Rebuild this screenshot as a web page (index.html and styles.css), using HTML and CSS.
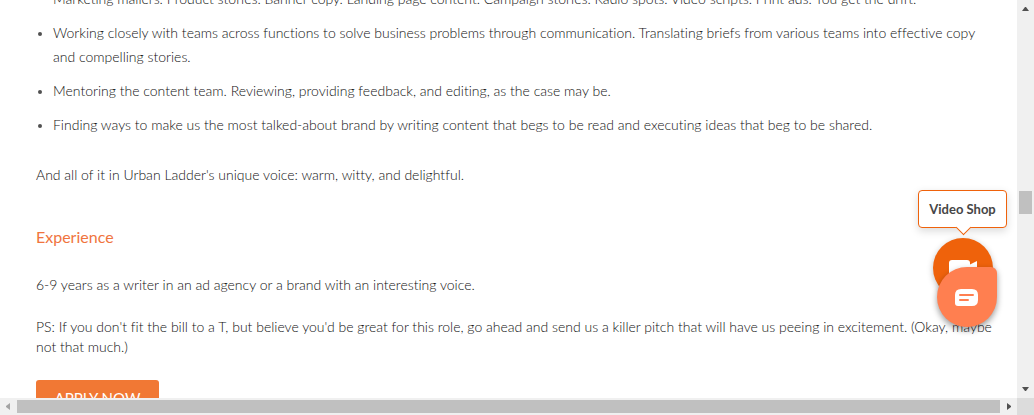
FILE: index.html
```html
<!DOCTYPE html>
<html lang="en">
<head>
<meta charset="utf-8">
<title>Careers</title>
<link rel="stylesheet" href="styles.css">
</head>
<body>
<div class="frame">
  <main class="page">
    <ul class="duties">
      <li class="plain">Marketing mailers. Product stories. Banner copy. Landing page content. Campaign stories. Radio spots. Video scripts. Print ads. You get the drift.</li>
      <li>Working closely with teams across functions to solve business problems through communication. Translating briefs from various teams into effective copy and compelling stories.</li>
      <li>Mentoring the content team. Reviewing, providing feedback, and editing, as the case may be.</li>
      <li>Finding ways to make us the most talked-about brand by writing content that begs to be read and executing ideas that beg to be shared.</li>
    </ul>
    <p class="voice">And all of it in Urban Ladder's unique voice: warm, witty, and delightful.</p>
    <h2 class="heading">Experience</h2>
    <p class="text">6-9 years as a writer in an ad agency or a brand with an interesting voice.</p>
    <p class="text">PS: If you don't fit the bill to a T, but believe you'd be great for this role, go ahead and send us a killer pitch that will have us peeing in excitement. (Okay, maybe not that much.)</p>
    <button class="apply" type="button">APPLY NOW</button>
  </main>
  <aside class="widgets">
    <div class="tip">Video Shop</div>
    <button class="video" type="button" aria-label="Video Shop">
      <svg width="28" height="16" viewBox="0 0 28 16"><rect width="21" height="16" rx="3" fill="#fff"/><path d="M20 5 28 1V15L20 11Z" fill="#fff"/></svg>
    </button>
    <button class="chat" type="button" aria-label="Chat">
      <svg width="24" height="18" viewBox="0 0 24 18"><path d="M6 1H17Q23 1 23 7V12Q23 18 17 18H3Q0 18 0 15V7Q0 1 6 1Z" fill="#fff"/><path d="M5 7H18M5 12H13" stroke="#ff7f50" stroke-width="2" stroke-linecap="round"/></svg>
    </button>
  </aside>
  <div class="bar bar-y">
    <svg class="arrow" width="17" height="17" viewBox="0 0 17 17"><path d="M5 11 8 7H9L12 11Z" fill="#505050"/></svg>
    <div class="track"><div class="thumb"></div></div>
    <svg class="arrow" width="17" height="17" viewBox="0 0 17 17"><path d="M5 6 8 10H9L12 6Z" fill="#505050"/></svg>
  </div>
  <div class="bar bar-x">
    <svg class="arrow" width="17" height="17" viewBox="0 0 17 17"><path d="M10 5 6 8V9L10 12Z" fill="#a3a3a3"/></svg>
    <div class="thumb"></div>
    <svg class="arrow" width="17" height="17" viewBox="0 0 17 17"><path d="M7 5 11 8V9L7 12Z" fill="#505050"/></svg>
  </div>
  <div class="corner"></div>
</div>
</body>
</html>
```
FILE: styles.css
```css
* { box-sizing: border-box; }
body {
  margin: 0;
  background: #fff;
  color: #111;
  font-family: Lato, "Liberation Sans", sans-serif;
  font-size: 14px;
  font-weight: 300;
  font-variant-ligatures: none;
  line-height: 20px;
}
.frame {
  display: grid;
  grid-template-columns: minmax(0, 1fr) 17px;
  grid-template-rows: minmax(0, 1fr) 17px;
  height: 100vh;
  overflow: hidden;
  position: relative;
}
.page { overflow: hidden; padding: 0 24px 0 36px; }
.duties {
  margin: -13px 0 28px;
  padding-left: 17px;
  line-height: 24px;
}
.duties li { margin-bottom: 10px; }
.duties li::marker { color: #515151; font-size: 12px; }
.duties .plain { list-style: none; }
.voice { margin: 0 0 40px; }
.heading {
  margin: 0 0 26px;
  color: #f0743e;
  font-size: 16px;
  font-weight: 400;
  line-height: 24px;
}
.text { margin: 0 0 22px; }
.apply {
  height: 36px;
  min-width: 123px;
  margin-top: 1px;
  padding: 0 16px;
  border: 0;
  border-radius: 3px;
  background: #f17834;
  color: #fff;
  font: inherit;
  font-size: 15px;
  font-weight: 400;
}
.widgets {
  position: absolute;
  top: 190px;
  right: 27px;
  width: 89px;
}
.tip {
  position: relative;
  height: 38px;
  border: 1px solid #ef620b;
  border-radius: 4px;
  background: #fff;
  box-shadow: 0 3px 8px rgba(0, 0, 0, .15);
  color: #464646;
  font-size: 13px;
  font-weight: 700;
  line-height: 36px;
  text-align: center;
}
.tip::after {
  content: "";
  position: absolute;
  top: 31px;
  left: 39px;
  width: 10px;
  height: 10px;
  border: solid #ef620b;
  border-width: 0 1px 1px 0;
  background: #fff;
  transform: rotate(45deg);
}
.video, .chat {
  position: absolute;
  width: 60px;
  height: 60px;
  padding: 0;
  border: 0;
  display: grid;
  place-items: center;
}
.video {
  top: 48px;
  left: 15px;
  border-radius: 50%;
  background: #ef620b;
  box-shadow: 0 2px 6px rgba(0, 0, 0, .25);
}
.chat {
  top: 77px;
  left: 19px;
  border-radius: 30px 6px 30px 30px;
  background: #ff7f50;
  box-shadow: 0 3px 6px rgba(0, 0, 0, .4);
}
.bar { display: flex; background: #f0f0f0; }
.bar-y { flex-direction: column; }
.arrow { flex: none; display: block; }
.track { flex: 1; padding: 0 2px; display: flex; flex-direction: column; }
.track::before { content: ""; flex: 174; }
.track::after { content: ""; flex: 167; }
.thumb { background: #c0c0c0; }
.track .thumb { height: 23px; }
.bar-x .thumb { flex: 1; margin: 2px 0; }
.corner { background: #dcdcdc; }
```
